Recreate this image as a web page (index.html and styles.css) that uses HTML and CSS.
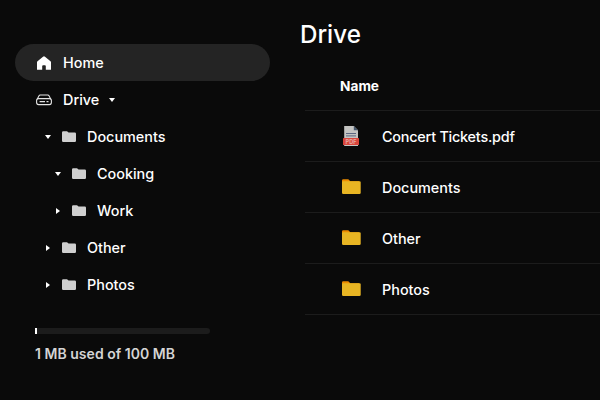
FILE: index.html
```html
<!DOCTYPE html>
<html lang="en">
<head>
<meta charset="utf-8">
<title>Drive</title>
<link rel="stylesheet" href="styles.css">
</head>
<body>
<svg class="defs" width="0" height="0">
  <symbol id="folder" viewBox="0 0 14 12"><path d="M1.2.2H5L6.6 1.6H12.8Q14 1.6 14 2.8V9.8Q14 11 12.8 11H1.2Q0 11 0 9.8V1.4Q0 .2 1.2.2Z" fill="#cfcfcf"/></symbol>
  <symbol id="down" viewBox="0 0 6 4"><path d="M0 0H6L3 4Z" fill="#fff"/></symbol>
  <symbol id="right" viewBox="0 0 4 6"><path d="M0 0V6L4 3Z" fill="#fff"/></symbol>
  <symbol id="yellow-folder" viewBox="0 0 19 16"><path d="M0 1.6Q0 .3 1.3.3H6.3L8.3 2.2H17V8H0Z" fill="#ed8c00"/><path d="M0 3.3Q0 2.3 1 2.3H17.6Q18.7 2.3 18.7 3.4V13.8Q18.7 15 17.5 15H1.2Q0 15 0 13.8Z" fill="#e8b523"/></symbol>
</svg>
<div class="app">
  <nav class="sidebar">
    <a class="item active"><svg class="icon" viewBox="0 0 16 16"><path d="M8 1.3Q8.5 1.3 9 1.8L14.5 6.2Q15 6.7 15 7.3V14.8H9.8V11.2Q9.8 10.3 8.9 10.3H7.1Q6.2 10.3 6.2 11.2V14.8H1V7.3Q1 6.7 1.5 6.2L7 1.8Q7.5 1.3 8 1.3Z" fill="#fff"/></svg><span>Home</span></a>
    <a class="item"><svg class="icon" viewBox="0 0 16 16" fill="none" stroke="#e4e4e4" stroke-width="1.1"><path d="M1.2 7.2L3 3.7Q3.4 3 4.2 3H11.8Q12.6 3 13 3.7L14.8 7.2"/><rect x=".6" y="6.6" width="14.8" height="6" rx="2"/><path d="M3.6 9.6H9M10.5 9.6H12.5"/></svg><span>Drive</span><svg class="down after"><use href="#down"/></svg></a>
    <a class="item l1"><svg class="down"><use href="#down"/></svg><svg class="folder"><use href="#folder"/></svg><span>Documents</span></a>
    <a class="item l2"><svg class="down"><use href="#down"/></svg><svg class="folder"><use href="#folder"/></svg><span>Cooking</span></a>
    <a class="item l2"><svg class="right"><use href="#right"/></svg><svg class="folder"><use href="#folder"/></svg><span>Work</span></a>
    <a class="item l1"><svg class="right"><use href="#right"/></svg><svg class="folder"><use href="#folder"/></svg><span>Other</span></a>
    <a class="item l1"><svg class="right"><use href="#right"/></svg><svg class="folder"><use href="#folder"/></svg><span>Photos</span></a>
    <div class="storage"><div class="track"><div class="used"></div></div><div class="label">1 MB used of 100 MB</div></div>
  </nav>
  <main class="content">
    <h1>Drive</h1>
    <div class="table">
      <div class="row head">Name</div>
      <div class="row"><svg class="pdf" viewBox="0 0 16 21"><path d="M1.2 0H10.8L15 4.2V20H1.2Z" fill="#c4c4c2"/><path d="M10.8 0L15 4.2H10.8Z" fill="#46576b"/><path d="M3 7.5H13M3 9.9H13" stroke="#5c6780" stroke-width="1"/><rect y="12" width="16" height="7" rx=".6" fill="#d8453b"/><text x="8" y="17.5" text-anchor="middle">PDF</text></svg><span class="file">Concert Tickets.pdf</span></div>
      <div class="row"><svg class="yellow"><use href="#yellow-folder"/></svg><span>Documents</span></div>
      <div class="row"><svg class="yellow"><use href="#yellow-folder"/></svg><span>Other</span></div>
      <div class="row"><svg class="yellow"><use href="#yellow-folder"/></svg><span>Photos</span></div>
    </div>
  </main>
</div>
</body>
</html>
```
FILE: styles.css
```css
* { box-sizing: border-box; }
body { margin: 0; background: #0a0a0a; color: #fff; font: 500 14.4px/20px Inter, sans-serif; overflow: hidden; }
.defs { position: absolute; }
svg { flex: none; display: block; }
.app { display: flex; width: 600px; height: 400px; }
.sidebar { width: 300px; padding: 44px 30px 0 15px; }
.item { display: flex; align-items: center; height: 37px; padding-left: 21px; border-radius: 19px; white-space: nowrap; }
.active { background: #242424; }
.icon { width: 16px; height: 16px; margin-right: 11px; }
.down { width: 6px; height: 4px; margin: 0 11px 0 0; }
.right { width: 4px; height: 6px; margin: 0 12px 0 1px; }
.after { margin: 0 0 0 10px; }
.l1 { padding-left: 30px; }
.l2 { padding-left: 40px; }
.folder { width: 14px; height: 12px; margin-right: 11px; }
.storage { margin: 25px 0 0 20px; }
.track { width: 175px; height: 6px; background: #1c1c1c; border-radius: 0 3px 3px 0; }
.used { width: 2px; height: 6px; background: #fff; }
.label { margin-top: 10px; color: #d4d4d4; font-weight: 600; font-size: 14px; letter-spacing: 0.03px; }
.content { flex: 1; min-width: 0; padding-top: 20px; }
h1 { margin: 0; font-size: 24.2px; line-height: 30px; font-weight: 550; }
.table { margin: 12px 0 0 5px; }
.row { display: flex; align-items: center; height: 51px; padding: 2px 0 0 36px; border-bottom: 1px solid #1c1c1c; }
.head { height: 49px; padding: 0 0 0 35px; font-weight: 700; font-size: 13.7px; }
.pdf { width: 16px; height: 21px; margin: 0 23px 2px 2px; }
.pdf text { font: 700 5.5px Inter, sans-serif; fill: #e8aaa4; }
.yellow { width: 19px; height: 16px; margin: 0 21px 2px 1px; }
.file { letter-spacing: -0.22px; }
```
